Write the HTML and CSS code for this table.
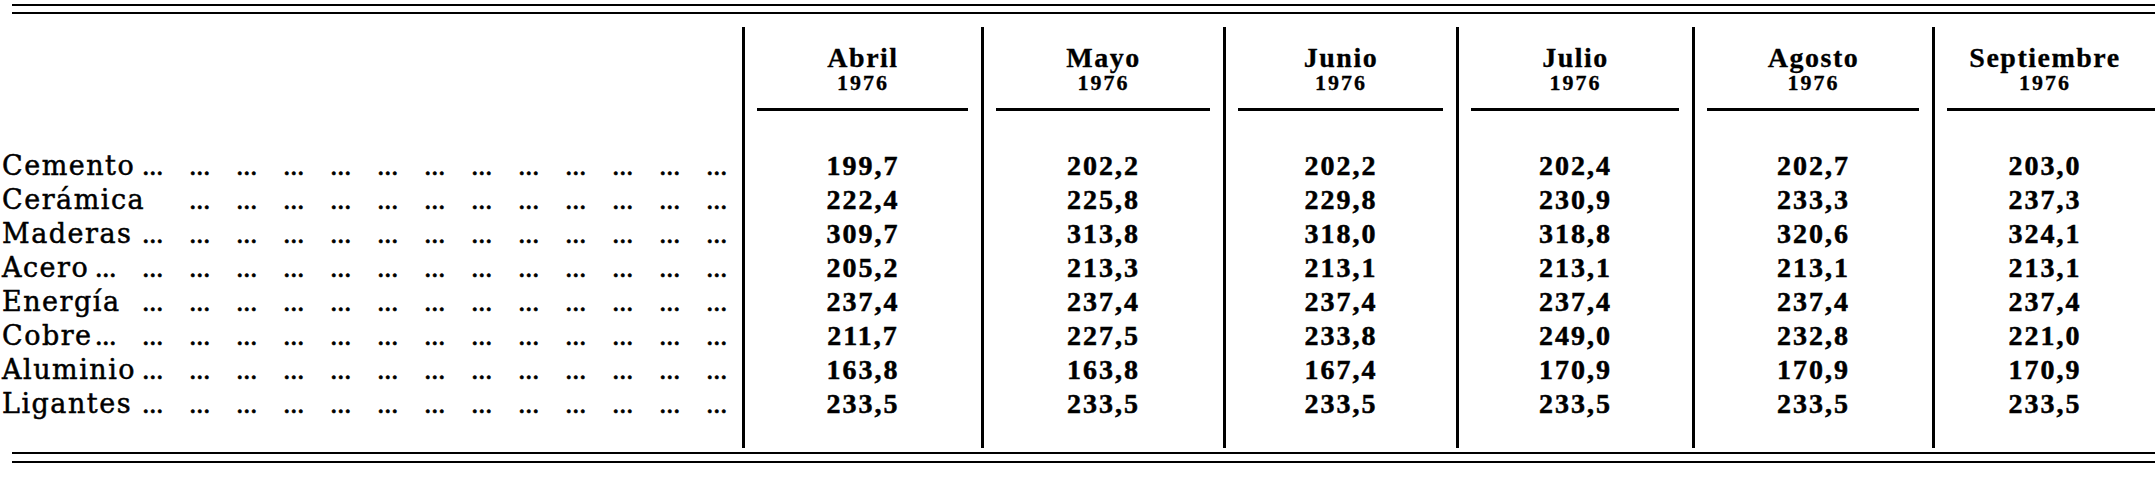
FILE: index.html
```html
<!DOCTYPE html>
<html lang="es">
<head>
<meta charset="utf-8">
<title>Índices de precios 1976</title>
<link rel="stylesheet" href="styles.css">
</head>
<body>
<div class="rule rule-top"></div>
<div class="table">
  <div class="col col-labels">
    <div class="head-spacer"></div>
    <div class="row"><span class="label">Cemento</span><span class="dots">... ... ... ... ... ... ... ... ... ... ... ... ...</span></div>
    <div class="row"><span class="label">Cerámica</span><span class="dots">... ... ... ... ... ... ... ... ... ... ... ...</span></div>
    <div class="row"><span class="label">Maderas</span><span class="dots">... ... ... ... ... ... ... ... ... ... ... ... ...</span></div>
    <div class="row"><span class="label">Acero</span><span class="dots">... ... ... ... ... ... ... ... ... ... ... ... ... ...</span></div>
    <div class="row"><span class="label">Energía</span><span class="dots">... ... ... ... ... ... ... ... ... ... ... ... ...</span></div>
    <div class="row"><span class="label">Cobre</span><span class="dots">... ... ... ... ... ... ... ... ... ... ... ... ... ...</span></div>
    <div class="row"><span class="label">Aluminio</span><span class="dots">... ... ... ... ... ... ... ... ... ... ... ... ...</span></div>
    <div class="row"><span class="label">Ligantes</span><span class="dots">... ... ... ... ... ... ... ... ... ... ... ... ...</span></div>
  </div>

  <div class="col col-num">
    <div class="head"><div class="month">Abril</div><div class="year">1976</div><div class="uline"></div></div>
    <div class="cells">
      <div class="num">199,7</div><div class="num">222,4</div><div class="num">309,7</div><div class="num">205,2</div>
      <div class="num">237,4</div><div class="num">211,7</div><div class="num">163,8</div><div class="num">233,5</div>
    </div>
  </div>

  <div class="col col-num">
    <div class="head"><div class="month">Mayo</div><div class="year">1976</div><div class="uline"></div></div>
    <div class="cells">
      <div class="num">202,2</div><div class="num">225,8</div><div class="num">313,8</div><div class="num">213,3</div>
      <div class="num">237,4</div><div class="num">227,5</div><div class="num">163,8</div><div class="num">233,5</div>
    </div>
  </div>

  <div class="col col-num">
    <div class="head"><div class="month">Junio</div><div class="year">1976</div><div class="uline"></div></div>
    <div class="cells">
      <div class="num">202,2</div><div class="num">229,8</div><div class="num">318,0</div><div class="num">213,1</div>
      <div class="num">237,4</div><div class="num">233,8</div><div class="num">167,4</div><div class="num">233,5</div>
    </div>
  </div>

  <div class="col col-num">
    <div class="head"><div class="month">Julio</div><div class="year">1976</div><div class="uline"></div></div>
    <div class="cells">
      <div class="num">202,4</div><div class="num">230,9</div><div class="num">318,8</div><div class="num">213,1</div>
      <div class="num">237,4</div><div class="num">249,0</div><div class="num">170,9</div><div class="num">233,5</div>
    </div>
  </div>

  <div class="col col-num">
    <div class="head"><div class="month">Agosto</div><div class="year">1976</div><div class="uline"></div></div>
    <div class="cells">
      <div class="num">202,7</div><div class="num">233,3</div><div class="num">320,6</div><div class="num">213,1</div>
      <div class="num">237,4</div><div class="num">232,8</div><div class="num">170,9</div><div class="num">233,5</div>
    </div>
  </div>

  <div class="col col-num col-last">
    <div class="head"><div class="month">Septiembre</div><div class="year">1976</div><div class="uline"></div></div>
    <div class="cells">
      <div class="num">203,0</div><div class="num">237,3</div><div class="num">324,1</div><div class="num">213,1</div>
      <div class="num">237,4</div><div class="num">221,0</div><div class="num">170,9</div><div class="num">233,5</div>
    </div>
  </div>
</div>
<div class="rule rule-bottom"></div>
</body>
</html>
```

FILE: styles.css
```css
html, body {
  margin: 0;
  padding: 0;
  background: #ffffff;
  color: #000000;
}

body {
  width: 2155px;
  overflow: hidden;
  font-family: "Liberation Serif", "Times New Roman", serif;
}

.rule {
  margin-left: 12px;
  height: 6px;
  border-top: 2px solid #000;
  border-bottom: 2px solid #000;
}

.rule-top {
  margin-top: 4px;
}

.rule-bottom {
  margin-top: 4px;
  height: 7px;
}

.table {
  margin-top: 13px;
  display: grid;
  grid-template-columns: 742px 239px 242px 233px 236px 240px 1fr;
}

.col {
  padding-bottom: 27px;
}

.col-num {
  border-left: 3px solid #000;
  text-align: center;
}

.head {
  height: 84px;
  padding-top: 19px;
  box-sizing: border-box;
  display: flex;
  flex-direction: column;
  align-items: center;
}

.month {
  font-weight: bold;
  font-size: 28px;
  line-height: 24px;
  letter-spacing: 1.5px;
  -webkit-text-stroke: 0.3px #000;
}

.year {
  margin-top: 2px;
  font-weight: bold;
  font-size: 22px;
  line-height: 22px;
  letter-spacing: 2px;
  -webkit-text-stroke: 0.3px #000;
}

.uline {
  align-self: stretch;
  margin: 14px 13px 0 12px;
  height: 3px;
  background: #000;
}

.col-last .uline {
  margin-right: 0;
}

.cells {
  padding-top: 38px;
}

.num {
  height: 34px;
  font-weight: bold;
  font-size: 28px;
  line-height: 34px;
  letter-spacing: 2px;
  -webkit-text-stroke: 0.5px #000;
}

.head-spacer {
  height: 122px;
}

.col-labels {
  padding-right: 14px;
}

.row {
  height: 34px;
  display: flex;
  align-items: baseline;
}

.label {
  flex: none;
  font-family: "DejaVu Serif", "Liberation Serif", serif;
  font-size: 27px;
  line-height: 34px;
  letter-spacing: 1.5px;
  padding-left: 2px;
  -webkit-text-stroke: 0.5px #000;
}

.dots {
  flex: 1;
  min-width: 0;
  text-align: right;
  white-space: nowrap;
  font-weight: bold;
  font-size: 22px;
  line-height: 34px;
  letter-spacing: 1.5px;
  word-spacing: 19px;
  -webkit-text-stroke: 0.4px #000;
}
```
